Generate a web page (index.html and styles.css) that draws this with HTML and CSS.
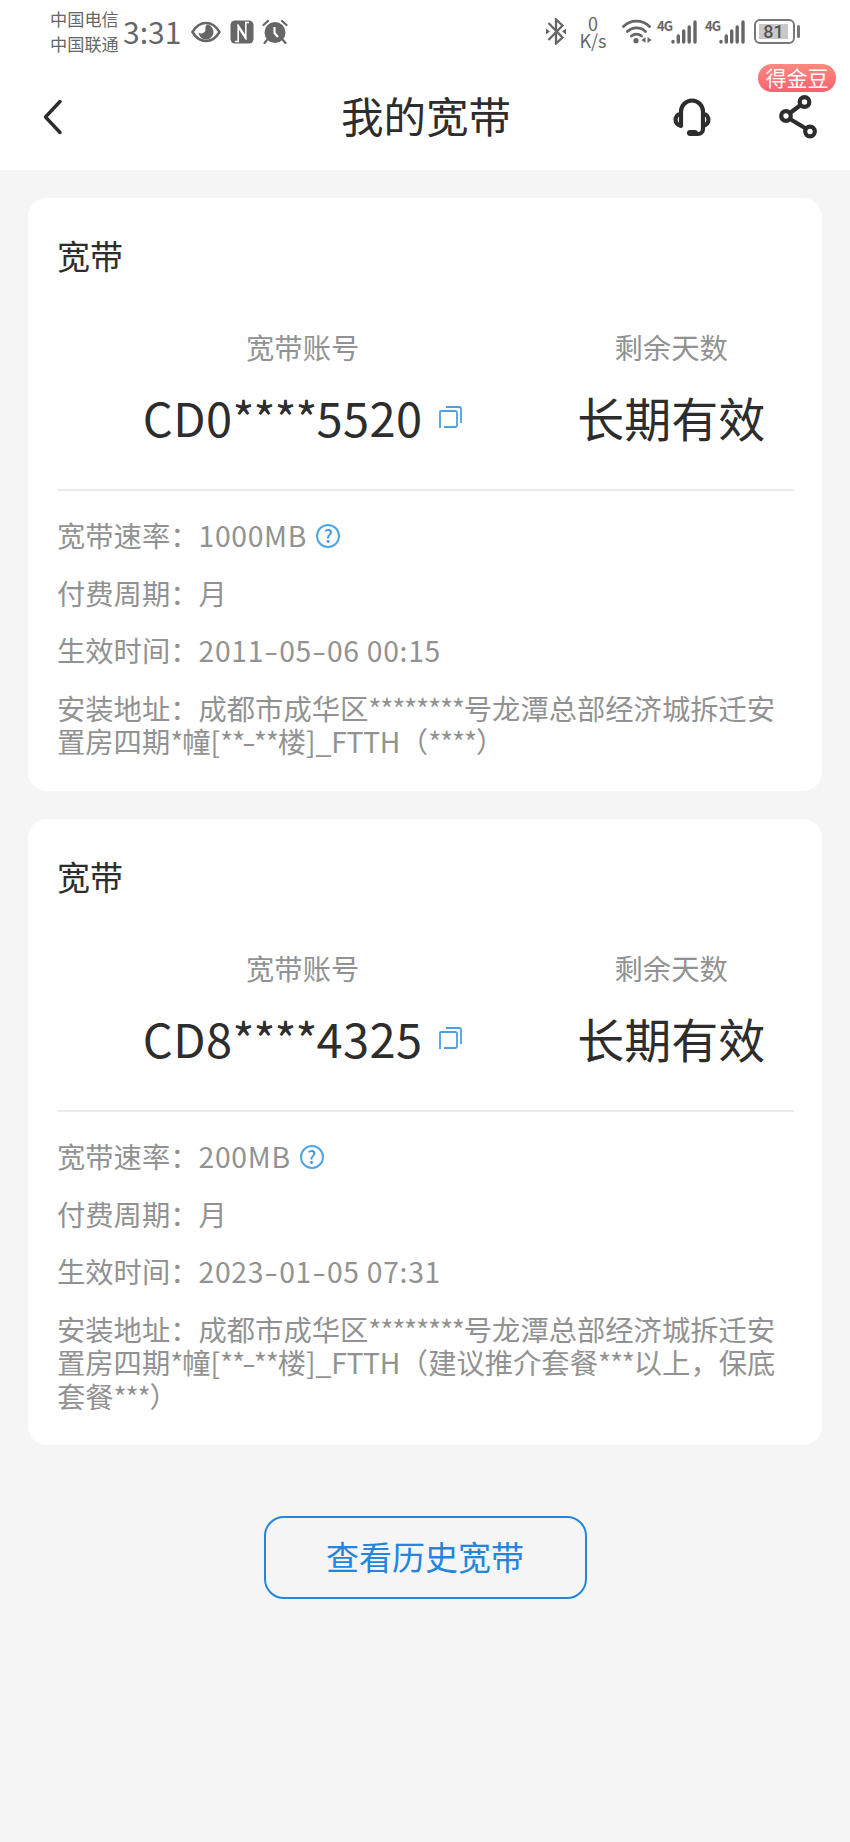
FILE: index.html
```html
<!DOCTYPE html>
<html lang="zh-CN">
<head>
    <meta charset="UTF-8">
    <meta name="viewport" content="width=device-width, initial-scale=1.0">
    <title>我的宽带</title>
    <link rel="stylesheet" href="styles.css">
</head>
<body>
    <svg class="sprite">
        <symbol id="icon-copy" viewBox="0 0 23 23">
            <path d="M1 22V6a1 1 0 0 1 1-1h14a2 2 0 0 1 2 2v12a2 2 0 0 1-2 2H5M7 1h13a2 2 0 0 1 2 2v14"/>
        </symbol>
        <symbol id="icon-signal" viewBox="0 0 27 24">
            <path d="M2 21.500v.5M7.300 16v6M12.700 11v11M18.200 7v15M24 2v20"/>
        </symbol>
    </svg>

    <div class="status-bar">
        <div class="carriers">
            <span>中国电信</span>
            <span>中国联通</span>
        </div>
        <span class="time">3:31</span>
        <svg class="icon-eye" width="30" height="22" viewBox="0 0 30 22">
            <path d="M1.500 11C5 5 9.500 2 15 2s10 3 13.500 9C25 17 20.500 20 15 20S5 17 1.500 11z" fill="none" stroke="#666" stroke-width="2.500"/>
            <path d="M16 3.500a7.500 7.500 0 1 1-8.500 8c2.500 2 7 .5 7-3 0-2-.5-3.500 1.500-5z" fill="#666"/>
        </svg>
        <svg class="icon-nfc" width="24" height="24" viewBox="0 0 24 24">
            <rect x="0.500" y="0.500" width="23" height="23" rx="4.500" fill="#666"/>
            <path d="M5 21.500h3.200V7l8.300 12.500M19 2.500h-3.200V17L7.500 4.500" fill="none" stroke="#fff" stroke-width="1.600"/>
        </svg>
        <svg class="icon-alarm" width="26" height="24" viewBox="0 0 26 24">
            <circle cx="13" cy="12.500" r="10.500" fill="#666"/>
            <path d="M1.500 5L6 1M24.500 5L20 1M5 20l-2.500 3M21 20l2.500 3" stroke="#666" stroke-width="2.200" stroke-linecap="round"/>
            <path d="M12.500 7v6l3.500 4" fill="none" stroke="#fff" stroke-width="2.200"/>
        </svg>

        <svg class="icon-bluetooth" width="20" height="27" viewBox="0 0 20 27">
            <path d="M2.500 5l14 14.500-6.500 6v-24l6.500 6L2.500 22" fill="none" stroke="#666" stroke-width="2.300"/>
            <path d="M0 10.500l4 3-4 3zM20 10.500l-4 3 4 3z" fill="#666"/>
        </svg>
        <div class="speed">
            <span>0</span>
            <span>K/s</span>
        </div>
        <svg class="icon-wifi" width="30" height="25" viewBox="0 0 30 25">
            <path d="M1.500 7.500a18.500 18.500 0 0 1 26 0M5.500 12.500a13 13 0 0 1 18 0M9.500 17a7.500 7.500 0 0 1 10 0" fill="none" stroke="#666" stroke-width="2.800" stroke-linecap="round"/>
            <circle cx="14" cy="21.700" r="2.600" fill="#666"/>
            <path d="M23.500 18v6l-4-3zM25.500 18v6l4-3z" fill="#666"/>
        </svg>
        <div class="signal">
            <span>4G</span>
            <svg width="27" height="24"><use href="#icon-signal"/></svg>
        </div>
        <div class="signal">
            <span>4G</span>
            <svg width="27" height="24"><use href="#icon-signal"/></svg>
        </div>
        <div class="battery"><span>81</span></div>
    </div>

    <header class="nav-bar">
        <svg class="nav-back" width="20" height="36" viewBox="0 0 20 36">
            <path d="M17 2.500L2.500 18 17 33.500"/>
        </svg>
        <h1>我的宽带</h1>
        <svg class="nav-service" width="42" height="40" viewBox="0 0 42 40">
            <path d="M10 29V14.500a11 11 0 0 1 22 0V32a5 5 0 0 1-5 5h-4M10 16.500a6.200 6.200 0 0 0 0 12.300M32 16.500a6.200 6.200 0 0 1 0 12.300"/>
            <rect class="mic" x="16" y="33" width="11" height="6" rx="3"/>
        </svg>
        <div class="nav-share">
            <svg width="40" height="44" viewBox="0 0 40 44">
                <path d="M12 18l10-7.500M12 24l15 9"/>
                <circle cx="26.500" cy="7" r="4.800"/>
                <circle cx="8" cy="21" r="4.800"/>
                <circle cx="32" cy="36.500" r="4.800"/>
            </svg>
            <span class="badge">得金豆</span>
        </div>
    </header>

    <main class="content">
        <section class="card">
            <h2>宽带</h2>
            <div class="summary">
                <div class="summary-item">
                    <p class="label">宽带账号</p>
                    <p class="value">CD0<span class="stars">****</span>5520
                        <svg class="icon-copy" width="23" height="23"><use href="#icon-copy"/></svg>
                    </p>
                </div>
                <div class="summary-item">
                    <p class="label">剩余天数</p>
                    <p class="value long-term">长期有效</p>
                </div>
            </div>
            <div class="details">
                <p>宽带速率：<span class="num">1000MB</span><span class="help">?</span></p>
                <p>付费周期：月</p>
                <p>生效时间：<span class="num">2011<i>-</i>05<i>-</i>06 00:15</span></p>
                <p>安装地址：成都市成华区<span class="stars">********</span>号龙潭总部经济城拆迁安<br>置房四期<span class="stars">*</span>幢[<span class="stars">**</span><i>-</i><span class="stars">**</span>楼]_<span class="ftth">FTTH</span>（<span class="stars">****</span>）</p>
            </div>
        </section>

        <section class="card">
            <h2>宽带</h2>
            <div class="summary">
                <div class="summary-item">
                    <p class="label">宽带账号</p>
                    <p class="value">CD8<span class="stars">****</span>4325
                        <svg class="icon-copy" width="23" height="23"><use href="#icon-copy"/></svg>
                    </p>
                </div>
                <div class="summary-item">
                    <p class="label">剩余天数</p>
                    <p class="value long-term">长期有效</p>
                </div>
            </div>
            <div class="details">
                <p>宽带速率：<span class="num">200MB</span><span class="help">?</span></p>
                <p>付费周期：月</p>
                <p>生效时间：<span class="num">2023<i>-</i>01<i>-</i>05 07:31</span></p>
                <p>安装地址：成都市成华区<span class="stars">********</span>号龙潭总部经济城拆迁安<br>置房四期<span class="stars">*</span>幢[<span class="stars">**</span><i>-</i><span class="stars">**</span>楼]_<span class="ftth">FTTH</span>（建议推介套餐<span class="stars">***</span>以上，保底<br>套餐<span class="stars">***</span>）</p>
            </div>
        </section>

        <button class="history-btn">查看历史宽带</button>
    </main>
</body>
</html>
```

FILE: styles.css
```css
:root {
    --blue: #2386dc;
    --dark: #2d2d2d;
    --gray: #929292;
    --status: #666;
    --bg: #f5f5f5;
}

* {
    margin: 0;
    padding: 0;
    box-sizing: border-box;
}

body {
    background: var(--bg);
    color: var(--dark);
    font-family: "Noto Sans CJK SC", sans-serif;
    min-height: 1842px;
}

svg {
    display: block;
    flex-shrink: 0;
}

.sprite {
    display: none;
}

/* Status bar */
.status-bar {
    display: flex;
    align-items: center;
    height: 63px;
    padding: 0 55px 0 50px;
    background: white;
    color: var(--status);
}

.carriers {
    display: flex;
    flex-direction: column;
    width: 68px;
    margin-top: -2px;
    font-size: 17.2px;
    line-height: 25px;
    white-space: nowrap;
}

.time {
    width: 58px;
    margin: -2px 0 0 5px;
    font-size: 30px;
    line-height: 40px;
}

.icon-eye {
    margin-left: 10px;
}

.icon-nfc {
    margin-left: 9px;
}

.icon-alarm {
    margin-left: 8px;
}

.icon-bluetooth {
    margin-left: auto;
}

.speed {
    display: flex;
    flex-direction: column;
    align-items: center;
    width: 28px;
    margin: 0 15px 0 13px;
    font-size: 18px;
    line-height: 17px;
}

.icon-wifi {
    margin-right: 6px;
}

.signal {
    display: flex;
    width: 48px;
    height: 24px;
}

.signal span {
    width: 13px;
    margin-left: -1px;
    margin-right: 1px;
    font-size: 13px;
    font-weight: 700;
    line-height: 11px;
    letter-spacing: -1px;
}

.signal svg {
    stroke: var(--status);
    stroke-width: 3.4;
    stroke-linecap: round;
}

.battery {
    display: flex;
    position: relative;
    width: 41px;
    height: 25px;
    padding: 3px 5px 3px 3px;
    border: 2px solid #777;
    border-radius: 6px;
}

.battery span {
    flex: 1;
    background: #c9c9c9;
    color: #555;
    font-family: Roboto, sans-serif;
    font-size: 18px;
    font-weight: 500;
    line-height: 16px;
    text-align: center;
}

.battery::after {
    content: "";
    position: absolute;
    right: -7px;
    top: 4px;
    width: 3px;
    height: 13px;
    border-radius: 2px;
    background: #777;
}

/* Navigation bar */
.nav-bar {
    display: flex;
    align-items: center;
    height: 107px;
    padding: 0 32px 0 43px;
    background: white;
}

.nav-bar svg {
    fill: none;
    stroke: var(--dark);
    stroke-width: 4.2;
    stroke-linecap: round;
    stroke-linejoin: round;
}

.nav-bar .nav-back {
    stroke-width: 3.4;
}

.nav-bar h1 {
    margin: -3px 0 0 278px;
    font-size: 42.5px;
    font-weight: 400;
    line-height: 60px;
}

.nav-bar .mic {
    fill: var(--dark);
    stroke: none;
}

.nav-service {
    margin-left: auto;
    margin-right: 65px;
}

.nav-share {
    position: relative;
}

.badge {
    position: absolute;
    top: -31px;
    right: -18px;
    width: 78px;
    height: 28px;
    border-radius: 14px;
    background: linear-gradient(#fb8a80, #f9606f);
    color: white;
    font-size: 21px;
    line-height: 27px;
    text-align: center;
    white-space: nowrap;
}

/* Cards */
.content {
    display: flex;
    flex-direction: column;
    gap: 28.5px;
    padding: 28px 28px 0;
}

.card {
    padding: 41px 28px 33px 29px;
    border-radius: 19px;
    background: white;
}

.card h2 {
    font-size: 33px;
    font-weight: 400;
    line-height: 33px;
}

.summary {
    display: grid;
    grid-template-columns: 2fr 1fr;
    padding: 58px 0 45px;
    border-bottom: 2px solid #ebebeb;
    text-align: center;
}

.label {
    color: var(--gray);
    font-size: 28.3px;
    line-height: 33px;
}

.value {
    display: flex;
    align-items: center;
    justify-content: center;
    margin-top: 26px;
    font-size: 47px;
    line-height: 55px;
    letter-spacing: 0.4px;
}

.long-term {
    letter-spacing: 0;
}

.stars {
    letter-spacing: -0.045em;
}

.value .stars {
    letter-spacing: -0.02em;
}

.icon-copy {
    margin: 2px 0 0 17px;
    fill: none;
    stroke: #4a9fe8;
    stroke-width: 1.8;
}

.details {
    display: flex;
    flex-direction: column;
    gap: 24.5px;
    padding-top: 27px;
    color: var(--gray);
    font-size: 28.3px;
    line-height: 33.2px;
    white-space: nowrap;
}

.num {
    letter-spacing: 0.7px;
}

.ftth {
    letter-spacing: -0.4px;
}

.details i {
    display: inline-block;
    font-style: normal;
    transform: scaleX(1.4);
}

.num i {
    width: 15px;
    text-align: center;
}

.help {
    display: inline-block;
    width: 24px;
    height: 24px;
    margin-left: 9px;
    border: 2px solid #4fa5e6;
    border-radius: 50%;
    color: #3d97e0;
    font-size: 18px;
    font-weight: 500;
    line-height: 19px;
    text-align: center;
    vertical-align: 4px;
}

.history-btn {
    align-self: center;
    width: 323px;
    height: 83px;
    margin-top: 43px;
    padding-bottom: 3px;
    border: 2px solid var(--blue);
    border-radius: 20px;
    background: transparent;
    color: var(--blue);
    font-family: inherit;
    font-size: 33px;
}
```
